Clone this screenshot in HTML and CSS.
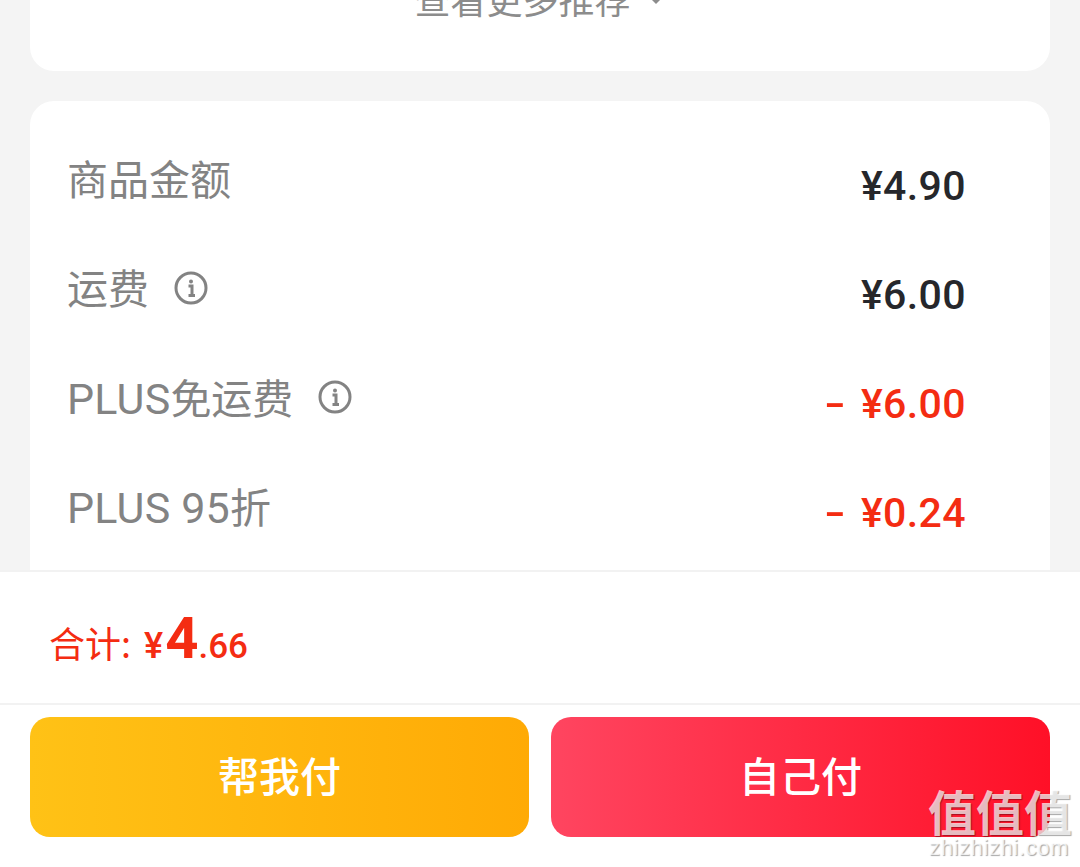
FILE: index.html
```html
<!DOCTYPE html>
<html lang="zh-CN">
<head>
    <meta charset="UTF-8" />
    <meta name="viewport" content="width=device-width, initial-scale=1.0" />
    <title>订单结算</title>
    <link rel="stylesheet" href="styles.css">
</head>
<body>
    <div class="page">
        <div class="content">
            <!-- 推荐 -->
            <div class="card card-more">
                <div class="more-link">
                    <span>查看更多推荐</span>
                    <svg class="more-arrow" viewBox="0 0 20 12"><path d="M1 1 L10 10 L19 1 Z" /></svg>
                </div>
            </div>

            <!-- 费用明细 -->
            <div class="card card-price">
                <div class="price-row">
                    <div class="price-label">商品金额</div>
                    <div class="price-value">¥4.90</div>
                </div>
                <div class="price-row">
                    <div class="price-label">运费
                        <svg class="info-icon" viewBox="0 0 34 34">
                            <circle cx="17" cy="17" r="15" />
                            <circle class="dot" cx="17" cy="10.5" r="2" />
                            <path d="M14.5 15 H18 V24 M14.5 24.5 H21" />
                        </svg>
                    </div>
                    <div class="price-value">¥6.00</div>
                </div>
                <div class="price-row">
                    <div class="price-label"><span><span class="latin">PLUS</span>免运费</span>
                        <svg class="info-icon" viewBox="0 0 34 34">
                            <circle cx="17" cy="17" r="15" />
                            <circle class="dot" cx="17" cy="10.5" r="2" />
                            <path d="M14.5 15 H18 V24 M14.5 24.5 H21" />
                        </svg>
                    </div>
                    <div class="price-value discount"><span class="minus">-</span>¥6.00</div>
                </div>
                <div class="price-row">
                    <div class="price-label"><span><span class="latin">PLUS 95</span>折</span></div>
                    <div class="price-value discount"><span class="minus">-</span>¥0.24</div>
                </div>
            </div>
        </div>

        <!-- 合计 -->
        <div class="total-bar">
            <span class="total-label">合计:</span>
            <span class="total-yen">¥</span><span class="total-int">4</span><span class="total-dec">.66</span>
        </div>

        <!-- 按钮 -->
        <div class="action-bar">
            <button class="btn btn-help">帮我付</button>
            <button class="btn btn-self">自己付</button>
        </div>

        <div class="watermark">
            <div class="watermark-logo">值值值</div>
            <div class="watermark-url">zhizhizhi.com</div>
        </div>
    </div>
</body>
</html>
```

FILE: styles.css
```css
:root {
    --red: #f42c12;
    --dark: #26272b;
    --gray: #838383;
    --line: #f2f2f2;
}

* {
    margin: 0;
    padding: 0;
    box-sizing: border-box;
}

body {
    background: #f4f4f4;
    font-family: "Noto Sans CJK SC", "Noto Sans", sans-serif;
    overflow: hidden;
}

.page {
    position: relative;
    display: flex;
    flex-direction: column;
    height: 867px;
    overflow: hidden;
}

.content {
    display: flex;
    flex-direction: column;
    gap: 30px;
    height: 570px;
    padding: 0 30px;
    overflow: hidden;
}

.card {
    flex-shrink: 0;
    background: #fff;
    border-radius: 24px;
}

.card-more {
    display: flex;
    justify-content: center;
    align-items: flex-end;
    height: 71px;
    padding: 0 0 53px 0;
    border-radius: 0 0 24px 24px;
}

.more-link {
    display: flex;
    align-items: center;
    gap: 15px;
    height: 40px;
    color: #8c8c8c;
    font-size: 36px;
    line-height: 40px;
    white-space: nowrap;
}

.more-arrow {
    width: 20px;
    height: 12px;
    margin-top: 4px;
    fill: #8c8c8c;
}

.card-price {
    padding: 30px 84px 0 37px;
    height: 600px;
    border-radius: 24px;
}

.price-row {
    display: flex;
    justify-content: space-between;
    align-items: center;
    height: 109px;
}

.price-label {
    display: flex;
    align-items: center;
    color: var(--gray);
    font-family: "Roboto", "Noto Sans CJK SC", sans-serif;
    font-size: 41px;
    line-height: 50px;
    margin-top: -9px;
}

.latin {
    font-size: 43px;
    letter-spacing: 0.2px;
}

.info-icon {
    width: 34px;
    height: 34px;
    margin-left: 25px;
    margin-top: -4px;
    fill: none;
    stroke: var(--gray);
    stroke-width: 3;
}

.info-icon .dot {
    fill: var(--gray);
    stroke: none;
}

.price-value {
    color: var(--dark);
    font-family: "Roboto", sans-serif;
    font-size: 41px;
    font-weight: 500;
    line-height: 50px;
    letter-spacing: 0.4px;
}

.discount {
    color: var(--red);
}

.minus {
    margin-right: 19px;
    display: inline-block;
    transform: scaleX(1.5);
}

.total-bar {
    display: flex;
    align-items: baseline;
    height: 135px;
    padding: 32px 0 0 49px;
    background: #fff;
    border-top: 2px solid var(--line);
    border-bottom: 2px solid var(--line);
    color: var(--red);
    white-space: nowrap;
}

.total-label {
    font-size: 36px;
    margin-right: 13px;
}

.total-yen {
    font-family: "Roboto", sans-serif;
    font-size: 36px;
    font-weight: 500;
}

.total-int {
    font-family: "Roboto", sans-serif;
    font-size: 58px;
    font-weight: 700;
    margin-left: 2px;
}

.total-dec {
    font-family: "Roboto", sans-serif;
    font-size: 35px;
    font-weight: 500;
}

.action-bar {
    flex: 1;
    display: flex;
    gap: 22px;
    padding: 12px 30px 30px;
    background: #fff;
}

.btn {
    flex: 1;
    height: 120px;
    padding-bottom: 6px;
    border: none;
    border-radius: 20px;
    color: #fff;
    font-family: inherit;
    font-size: 41px;
    font-weight: 500;
}

.btn-help {
    background: linear-gradient(90deg, #ffc216, #ffaa05);
}

.btn-self {
    background: linear-gradient(90deg, #ff4560, #ff1027);
}

.watermark {
    position: absolute;
    right: 10px;
    bottom: 8px;
    width: 142px;
    color: rgba(255, 255, 255, 0.72);
    text-align: center;
    text-shadow: 1px 1px 1px rgba(0, 0, 0, 0.35);
}

.watermark-logo {
    font-size: 48px;
    font-weight: 700;
    line-height: 54px;
    white-space: nowrap;
}

.watermark-url {
    font-family: "Liberation Sans", sans-serif;
    font-size: 22px;
    line-height: 22px;
    letter-spacing: 0.6px;
    white-space: nowrap;
}
```
